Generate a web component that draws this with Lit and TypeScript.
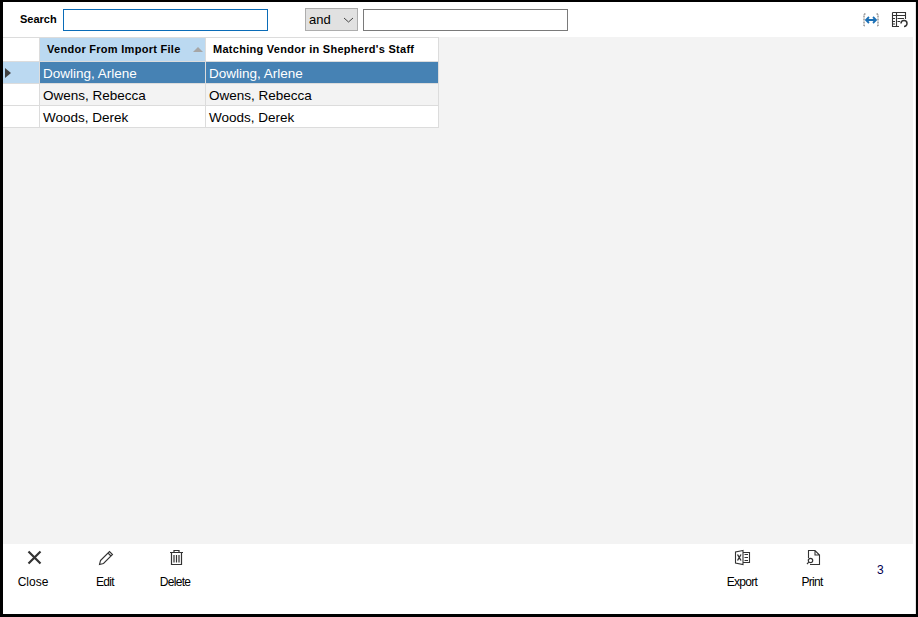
import { LitElement, html, css, svg } from "lit";
import { customElement } from "lit/decorators.js";

const rows = [
  ["Dowling, Arlene", "Dowling, Arlene"],
  ["Owens, Rebecca", "Owens, Rebecca"],
  ["Woods, Derek", "Woods, Derek"],
];

const icons = {
  close: svg`<path d="M2.5 2.5 L14.5 14.5 M14.5 2.5 L2.5 14.5" stroke="#333" stroke-width="2.2" fill="none"/>`,
  edit: svg`<path d="M2.5 11.5 L11.5 2.5 L14.5 5.5 L5.5 14.5 L1.5 15.5 Z M10 4 L13 7" stroke="#333" stroke-width="1.1" fill="none"/>`,
  del: svg`<path d="M2 3.5 H15 M6 3.5 V1.5 H11 V3.5 M3.5 4 V15.5 H13.5 V4 M6 6 V13.5 M8.5 6 V13.5 M11 6 V13.5" stroke="#333" stroke-width="1.2" fill="none"/>`,
  exp: svg`<path d="M9 1.5 L1.5 3 V14 L9 15.5 Z M9 3.5 H15.5 V13.5 H9 M10.5 5.5 H14 M10.5 8.5 H14 M10.5 11.5 H14" stroke="#333" stroke-width="1.1" fill="none"/><path d="M3.5 5.5 L7 11.5 M7 5.5 L3.5 11.5" stroke="#333" stroke-width="1.4" fill="none"/>`,
  print: svg`<path d="M3.5 9 V1.5 H10 L14.5 6 V15.5 H5 M10 1.5 V6 H14.5" stroke="#333" stroke-width="1.1" fill="none"/><circle cx="5.5" cy="11.5" r="2.2" stroke="#333" stroke-width="1.2" fill="none"/><path d="M3.8 13.2 L2 15" stroke="#333" stroke-width="1.2"/>`,
};

@customElement("app-root")
export class AppRoot extends LitElement {
  static styles = css`
    :host { display: block; width: 918px; height: 617px; box-sizing: border-box; border-style: solid; border-color: #000; border-width: 2px 2px 3px 3px; background: #fff; font-family: "Liberation Sans", Arial, sans-serif; color: #000; overflow: hidden; }
    .frame { display: flex; flex-direction: column; height: 100%; border-right: 1px solid #e3e3e3; }
    .top { height: 35px; flex: none; display: flex; align-items: center; padding-left: 17px; padding-right: 7px; }
    .lbl { font-size: 11px; font-weight: 700; width: 43px; position: relative; top: -1px; }
    .input { box-sizing: border-box; width: 205px; height: 22px; border: 1px solid #7a7a7a; background: #fff; }
    .input.first { border-color: #0a6cb8; }
    .select { box-sizing: border-box; width: 53px; height: 23px; margin-left: 37px; margin-right: 5px; background: #e1e1e1; border: 1px solid #adadad; font-size: 13px; display: flex; align-items: center; justify-content: space-between; padding: 0 3px 0 3px; }
    .spacer { flex: 1; }
    .tools { display: flex; gap: 12px; align-items: center; }
    .body { flex: 1; background: #f3f3f3; margin-right: 2px; }
    .grid { display: grid; grid-template-columns: 37px 166px 233px; width: 436px; font-size: 13.5px; line-height: 23px; }
    .c { box-sizing: border-box; height: 22px; padding-left: 3px; border-right: 1px solid #dcdcdc; border-bottom: 1px solid #dcdcdc; background: #fff; white-space: nowrap; overflow: hidden; }
    .h { height: 25px; border-top: 1px solid #dcdcdc; font-size: 11px; letter-spacing: 0.28px; font-weight: 700; line-height: 23px; padding-left: 7px; position: relative; }
    .h.sort { background: #bbd9f1; }
    .tri { position: absolute; right: 2px; top: 9px; width: 0; height: 0; border-left: 5px solid transparent; border-right: 5px solid transparent; border-bottom: 5px solid #a6a6a6; }
    .sel { background: #4682b4; color: #fff; }
    .alt { background: #f3f3f3; }
    .rh { padding: 0; position: relative; }
    .rh.cur { background: #bbd9f1; }
    .arrow { position: absolute; left: 2px; top: 6px; width: 0; height: 0; border-top: 5px solid transparent; border-bottom: 5px solid transparent; border-left: 6px solid #404040; }
    .bottom { height: 70px; flex: none; display: flex; font-size: 12px; letter-spacing: -0.7px; }
    .btn { width: 60px; margin-right: 10px; display: flex; flex-direction: column; align-items: center; padding-top: 5px; }
    .btn.first { margin-right: 12px; }
    .btn svg { display: block; width: 17px; height: 17px; margin-left: 3px; }
    .btn span { margin-top: 9px; line-height: 14px; }
    .btn.first span { letter-spacing: 0; }
    .btn.plain svg { margin-left: 1px; }
    .num { width: 38px; padding-top: 19px; margin-left: 25px; font-size: 12px; line-height: 14px; color: #000050; letter-spacing: 0; }
  `;

  private btn(icon: unknown, label: string, cls = "") {
    return html`<div class="btn ${cls}"><svg viewBox="0 0 17 17">${icon}</svg><span>${label}</span></div>`;
  }

  render() {
    return html`<div class="frame">
      <div class="top">
        <div class="lbl">Search</div>
        <div class="input first"></div>
        <div class="select"><span>and</span>
          <svg width="11" height="6" viewBox="0 0 11 6"><path d="M1 1 L5.5 5 L10 1" stroke="#444" fill="none"/></svg>
        </div>
        <div class="input"></div>
        <div class="spacer"></div>
        <div class="tools">
          <svg width="16" height="14" viewBox="0 0 16 14"><path d="M2.5 1 H1 V13 H2.5 M13.5 1 H15 V13 H13.5" stroke="#666" stroke-dasharray="2 1" fill="none"/><path d="M3 7 H13 M6 4 L3 7 L6 10 M10 4 L13 7 L10 10" stroke="#1a6fb5" stroke-width="1.8" fill="none"/></svg>
          <svg width="17" height="17" viewBox="0 0 17 17"><path d="M1.5 1.5 H14.5 V8 M1.5 1.5 V15.5 H8 M1.5 4.5 H14.5 M5.5 1.5 V15.5 M1.5 7.5 H4 M1.5 10.5 H4 M1.5 13 H4 M6.5 7.5 H13 M6.5 10.5 H9" stroke="#333" stroke-width="1.1" fill="none"/><path d="M10 12.5 a3 3 0 1 1 3 3" stroke="#333" stroke-width="1.5" fill="none"/></svg>
        </div>
      </div>
      <div class="body">
        <div class="grid">
          <div class="c h"></div>
          <div class="c h sort">Vendor From Import File<div class="tri"></div></div>
          <div class="c h">Matching Vendor in Shepherd's Staff</div>
          ${rows.map((r, i) => html`
            <div class="c rh ${i === 0 ? "cur" : ""}">${i === 0 ? html`<div class="arrow"></div>` : ""}</div>
            <div class="c ${i === 0 ? "sel" : i === 1 ? "alt" : ""}">${r[0]}</div>
            <div class="c ${i === 0 ? "sel" : i === 1 ? "alt" : ""}">${r[1]}</div>
          `)}
        </div>
      </div>
      <div class="bottom">
        ${this.btn(icons.close, "Close", "first")}
        ${this.btn(icons.edit, "Edit")}
        ${this.btn(icons.del, "Delete")}
        <div class="spacer"></div>
        ${this.btn(icons.exp, "Export", "plain")}
        ${this.btn(icons.print, "Print")}
        <div class="num">3</div>
      </div>
    </div>`;
  }
}
